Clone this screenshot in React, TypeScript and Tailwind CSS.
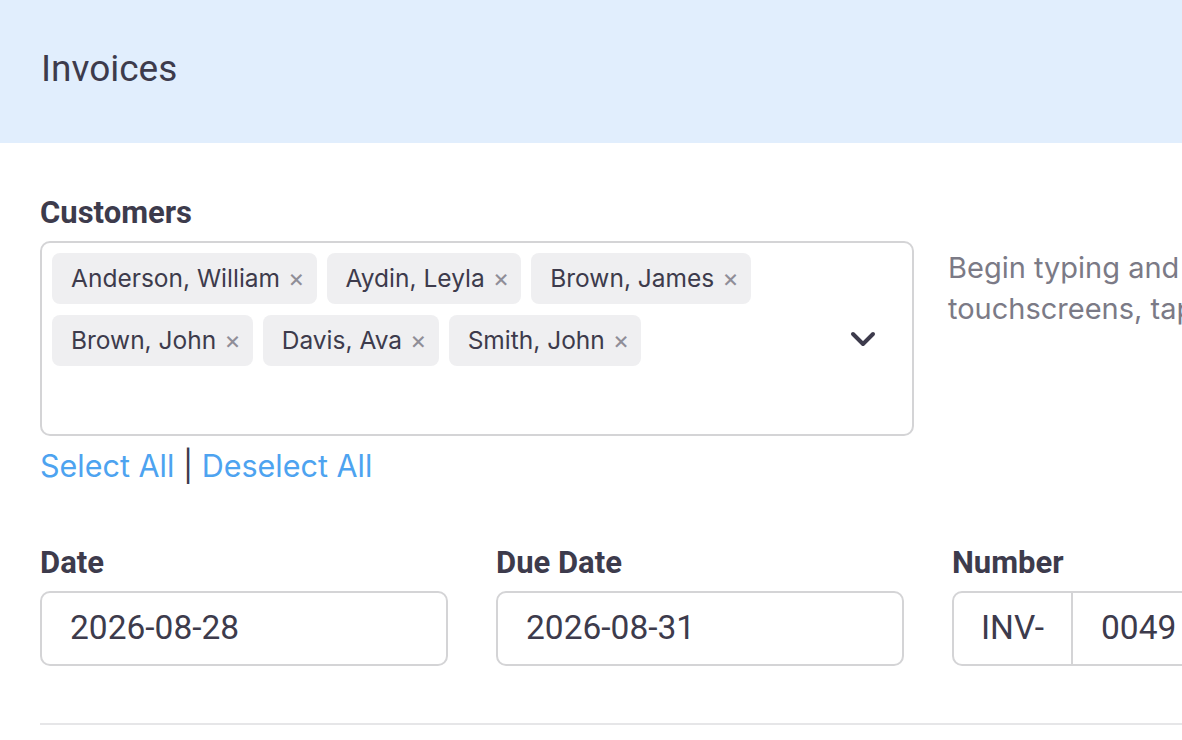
import { ChevronDown } from "lucide-react";

const customers = [
  "Anderson, William",
  "Aydin, Leyla",
  "Brown, James",
  "Brown, John",
  "Davis, Ava",
  "Smith, John",
];

function Chip({ name }: { name: string }) {
  return (
    <span className="flex h-[51px] items-center rounded-lg bg-[#efeff1] pl-[19px] pr-[12px] text-[24.5px] text-[#3d3b4c]">
      <span>{name}</span>
      <span className="ml-[8px] text-[25px] leading-none text-[#8f8e98]">×</span>
    </span>
  );
}

function Field({ label, value }: { label: string; value: string }) {
  return (
    <div className="w-[408px] shrink-0">
      <label className="block font-['Roboto'] text-[31px] font-bold leading-[40px] text-[#3d3b4c]">{label}</label>
      <div className="mt-[8px] flex h-[75px] items-center rounded-[10px] border-2 border-[#d4d4d6] pl-[28px] font-['Roboto'] text-[33.5px] text-[#3d3b4c]">
        {value}
      </div>
    </div>
  );
}

export default function App() {
  return (
    <div className="h-[740px] w-[1182px] overflow-hidden bg-white font-['Inter',sans-serif]">
      <div className="w-[1800px]">
        <header className="flex h-[143px] items-center bg-[#e1eefd] pb-[6px] pl-[41px]">
          <h1 className="font-['Roboto'] text-[37px] text-[#3d3b4c]">Invoices</h1>
        </header>

        <div className="pl-[40px]">
          <div className="mt-[50px] flex gap-[34px]">
            <div className="w-[874px] shrink-0">
              <label className="block font-['Roboto'] text-[31px] font-bold leading-[40px] text-[#3d3b4c]">Customers</label>
              <div className="mt-[8px] flex h-[195px] rounded-[10px] border-2 border-[#d4d4d6] p-[10px] pr-[29px]">
                <div className="flex flex-1 flex-wrap content-start gap-[10px] gap-y-[11px]">
                  {customers.map((c) => (
                    <Chip key={c} name={c} />
                  ))}
                </div>
                <div className="flex items-center self-stretch">
                  <ChevronDown className="h-[40px] w-[40px] text-[#3d3b4c]" strokeWidth={2.4} />
                </div>
              </div>
              <div className="mt-[10px] text-[30.5px] leading-[40px] text-[#4da3f0]">
                <a>Select All</a>
                <span className="text-[#3d3b4c]"> | </span>
                <a>Deselect All</a>
              </div>
            </div>
            <p className="mt-[54px] w-[980px] text-[29px] leading-[41px] text-[#7b7a86]">
              <span className="block">Begin typing and select customers from the list. On</span>
              <span className="block">touchscreens, tap the field to show the options.</span>
            </p>
          </div>

          <div className="mt-[57px] flex gap-[48px]">
            <Field label="Date" value="2026-08-28" />
            <Field label="Due Date" value="2026-08-31" />
            <div className="w-[408px] shrink-0">
              <label className="block font-['Roboto'] text-[31px] font-bold leading-[40px] text-[#3d3b4c]">Number</label>
              <div className="mt-[8px] flex h-[75px] rounded-[10px] border-2 border-[#d4d4d6] font-['Roboto'] text-[33.5px] text-[#3d3b4c]">
                <span className="flex w-[119px] items-center justify-center border-r-2 border-[#d4d4d6]">INV-</span>
                <span className="flex items-center pl-[28px]">0049</span>
              </div>
            </div>
          </div>

          <div className="mt-[57px] h-[2px] w-[1700px] bg-[#e6e6e8]" />
        </div>
      </div>
    </div>
  );
}
